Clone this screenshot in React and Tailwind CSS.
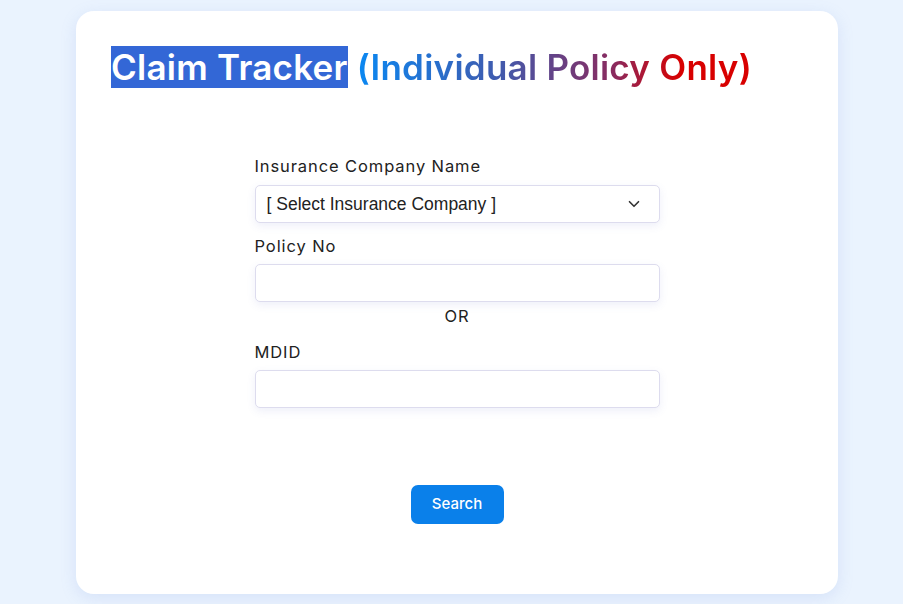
import { ChevronDown } from 'lucide-react'

const labelCls = "block font-['Inter',sans-serif] text-[16.5px] leading-[20px] tracking-[0.9px] text-[#222]"
const fieldCls = "w-full h-[38px] rounded-[5px] border border-[#dddcee] bg-white shadow-[0_3px_8px_rgba(90,100,200,0.10)]"

export default function App() {
  return (
    <div className="min-h-[604px] bg-[#eaf3fe] pt-[11px] pb-[10px]">
      <div className="ml-[76px] w-[762px] h-[583px] rounded-[18px] bg-white shadow-[0_4px_16px_rgba(120,150,220,0.18)] px-[35px] pt-[35px]">
        <h1 className="font-['Inter',sans-serif] text-[35px] leading-[42px] font-semibold tracking-[0.25px] whitespace-nowrap">
          <span className="bg-[#3367d6] text-white">Claim Tracker</span>{' '}
          <span className="bg-[linear-gradient(90deg,#0a88f2_0%,#3f5cb0_35%,#8a2a5e_65%,#d80000_82%,#d80000_100%)] bg-clip-text text-transparent">
            (Individual Policy Only)
          </span>
        </h1>

        <form className="mx-auto w-[405px] mt-[68px]" onSubmit={(e) => e.preventDefault()}>
          <label className={labelCls}>Insurance Company Name</label>
          <div className={`${fieldCls} mt-[9px] h-[37px] flex items-center justify-between pl-[11px] pr-[16px]`}>
            <span className="font-['Liberation_Sans',Arial,sans-serif] text-[17.5px] text-[#222]">[ Select Insurance Company ]</span>
            <ChevronDown size={18} strokeWidth={2.2} className="text-[#333]" />
          </div>

          <label className={`${labelCls} mt-[13px]`}>Policy No</label>
          <input className={`${fieldCls} mt-[8px] block outline-none`} />

          <p className="text-center font-['Inter',sans-serif] text-[16.5px] leading-[20px] tracking-[0.9px] text-[#222] mt-[4px]">OR</p>

          <label className={`${labelCls} mt-[16px]`}>MDID</label>
          <input className={`${fieldCls} mt-[8px] block outline-none`} />

          <div className="flex justify-center mt-[77px]">
            <button className="w-[93px] h-[39px] rounded-[7px] bg-[#0a80ea] text-white font-['Inter',sans-serif] text-[15px] font-medium">
              Search
            </button>
          </div>
        </form>
      </div>
    </div>
  )
}
